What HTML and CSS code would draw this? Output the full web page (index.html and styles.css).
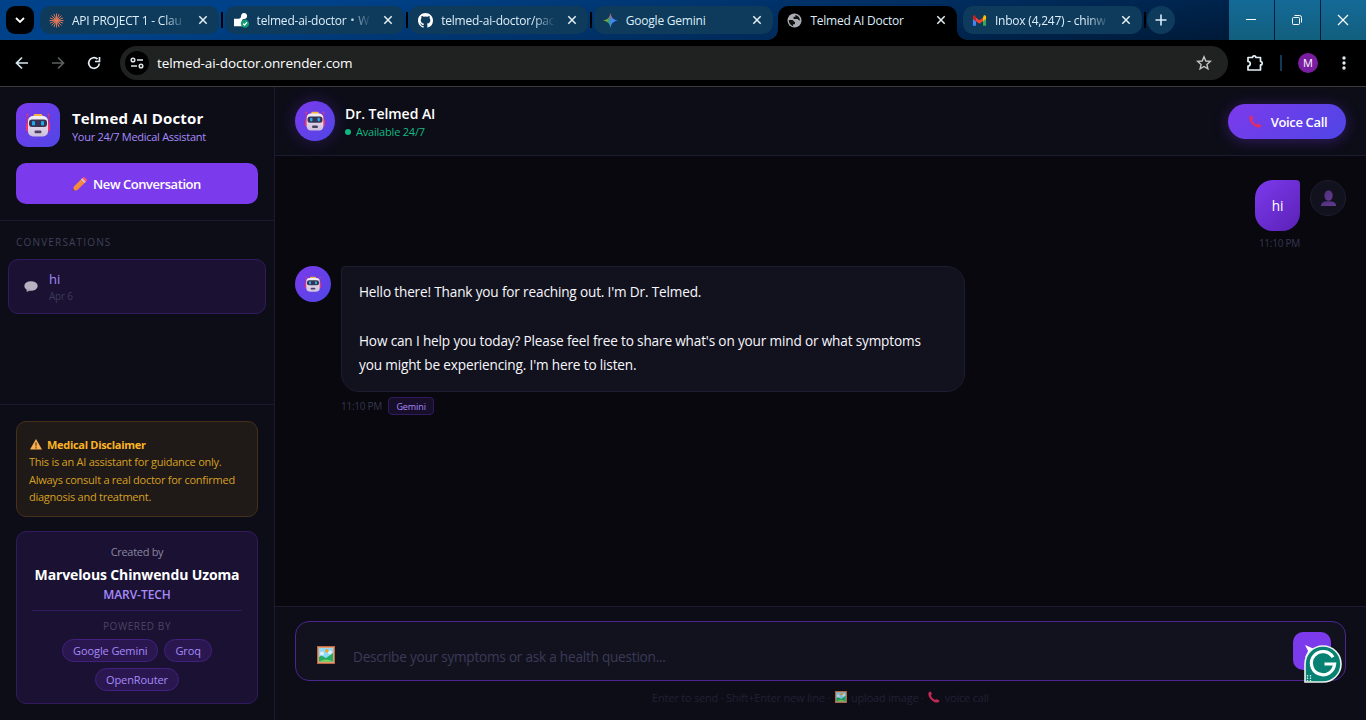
FILE: index.html
```
<!DOCTYPE html>
<html lang="en">
<head>
  <meta charset="UTF-8">
  <title>Telmed AI Doctor</title>
  <meta name="viewport" content="width=device-width, initial-scale=1.0">
  <link rel="stylesheet" href="styles.css">
</head>
<body>

  <svg class="defs" width="0" height="0">
    <defs>
      <linearGradient id="face" x1="0" y1="0" x2="0" y2="1">
        <stop offset="0" stop-color="#f3eef8"/><stop offset="1" stop-color="#cdbfdc"/>
      </linearGradient>
      <linearGradient id="orange" x1="0" y1="0" x2="1" y2="1">
        <stop offset="0" stop-color="#ff9a4a"/><stop offset="1" stop-color="#ee7a33"/>
      </linearGradient>
      <linearGradient id="gem" x1="0" y1="0" x2="1" y2="0">
        <stop offset="0" stop-color="#fbbc04"/><stop offset=".35" stop-color="#34a853"/>
        <stop offset=".55" stop-color="#4285f4"/><stop offset="1" stop-color="#3b86ff"/>
      </linearGradient>
      <linearGradient id="gemTop" x1="0" y1="0" x2="0" y2="1">
        <stop offset="0" stop-color="#f94543"/><stop offset=".45" stop-color="#f94543" stop-opacity="0"/>
      </linearGradient>
      <linearGradient id="user" x1="0" y1="0" x2="1" y2="1">
        <stop offset="0" stop-color="#4a2f7c"/><stop offset="1" stop-color="#663a90"/>
      </linearGradient>
    </defs>
    <symbol id="close" viewBox="0 0 10 10">
      <path d="M1.3 1.3l7.4 7.4M8.7 1.3L1.3 8.7" stroke="currentColor" stroke-width="1.5" fill="none"/>
    </symbol>
    <symbol id="robot" viewBox="0 0 24 24">
      <path d="M1.5 2.5v12M22.5 2.5v12" stroke="#d92a62" stroke-width="1"/>
      <circle cx="1.5" cy="1.7" r="1" fill="#f5386f"/><circle cx="22.5" cy="1.7" r="1" fill="#f5386f"/>
      <rect x="0" y="9.5" width="4" height="9" rx="2" fill="#ee3270"/>
      <rect x="20" y="9.5" width="4" height="9" rx="2" fill="#ee3270"/>
      <rect x="7.5" y="1" width="9" height="4" rx="1.5" fill="#f5b43a"/>
      <rect x="2" y="3" width="20" height="20.5" rx="5" fill="url(#face)"/>
      <rect x="3" y="6.5" width="18" height="7.5" rx="3" fill="#39334f"/>
      <rect x="6" y="8" width="3" height="4.5" rx="1.3" fill="#1fa9ee"/>
      <rect x="15" y="8" width="3" height="4.5" rx="1.3" fill="#1fa9ee"/>
      <rect x="8.5" y="17.5" width="7" height="2.8" rx="1.2" fill="#4a4060"/>
    </symbol>
    <symbol id="phone" viewBox="0 0 14 14">
      <path d="M1.2 1.2C2.500 0 3.300.6 3.900 1.900c.6 1.200.8 2-.1 2.900-.5.500-.3 1 .3 1.900.8 1.200 1.700 2.200 2.800 3 .8.600 1.300.8 1.900.3 1-.8 1.800-.5 3 .1 1.500.7 1.900 1.500.8 2.600-1.700 1.500-4.600.9-7-1C2.500 9.200.5 6.400.4 3.700c0-1 .2-1.900.8-2.500z" fill="#e12d60"/>
    </symbol>
    <symbol id="picture" viewBox="0 0 18 18">
      <rect width="18" height="18" fill="#b96b48"/>
      <rect x="1" y="1" width="16" height="16" fill="#e59a6b"/>
      <rect x="2" y="2" width="14" height="13.5" fill="#8fd9f8"/>
      <circle cx="5" cy="7.5" r="2" fill="#e4eefb"/><circle cx="13" cy="6.5" r="2" fill="#e4eefb"/>
      <circle cx="9.8" cy="4.7" r="1.8" fill="#f6a11f"/>
      <path d="M2 11l2.500-1.500L9 12l7-5v8.500H2z" fill="#26ad65"/>
      <path d="M3 15.500c2-2.500 10-2.500 12 0z" fill="#7ed957"/>
    </symbol>
  </svg>

  <!-- browser tabs -->
  <div class="tab-strip">
    <button class="tab-search"><svg width="10" height="6"><path d="M1 1l4 4 4-4" stroke="#fff" stroke-width="1.8" fill="none"/></svg></button>
    <div class="tabs">
      <div class="tab">
        <svg class="favicon" viewBox="-8 -8 16 16"><path d="M0-7.500V7.500M-7.500 0H7.500M-5.300-5.300L5.300 5.300M5.300-5.300L-5.300 5.300M-2.800-7L2.800 7M2.800-7L-2.800 7M-7-2.800L7 2.800M7-2.800L-7 2.800" stroke="#e2795a" stroke-width="1"/></svg>
        <span class="tab-title fade">API PROJECT 1 - Clau</span>
        <svg class="tab-close"><use href="#close"/></svg>
      </div>
      <div class="tab">
        <svg class="favicon" viewBox="0 0 16 16"><path d="M0 6h5c1.500 0 2.500-1 2.500-2.500S8.500 0 10.700 0C13 0 14 1.700 14 3.200c0 2-1.500 3.300-3.500 3.300-1.500 0-2 1-2 2.500V14H0z" fill="#fff"/><circle cx="11.7" cy="11.3" r="4.4" fill="#119a75"/><path d="M9.700 11.300l1.500 1.500 2.700-2.900" stroke="#fff" stroke-width="1.3" fill="none"/></svg>
        <span class="tab-title fade">telmed-ai-doctor・W</span>
        <svg class="tab-close"><use href="#close"/></svg>
      </div>
      <div class="tab">
        <svg class="favicon" viewBox="0 0 16 16"><path fill="#fff" d="M8 0C3.580 0 0 3.580 0 8c0 3.540 2.290 6.530 5.470 7.590.4.070.55-.17.55-.38 0-.19-.01-.82-.01-1.490-2.010.37-2.530-.49-2.690-.94-.09-.23-.48-.94-.82-1.130-.28-.15-.68-.52-.01-.53.63-.01 1.080.58 1.230.82.72 1.210 1.870.87 2.330.66.070-.52.280-.87.510-1.070-1.780-.2-3.640-.89-3.640-3.950 0-.87.310-1.590.82-2.150-.08-.2-.36-1.020.08-2.120 0 0 .67-.21 2.200.82a7.600 7.600 0 0 1 4 0c1.530-1.040 2.200-.82 2.200-.82.44 1.100.16 1.920.08 2.120.51.56.82 1.270.82 2.150 0 3.070-1.870 3.750-3.650 3.950.29.25.54.73.54 1.480 0 1.070-.01 1.930-.01 2.200 0 .21.15.46.55.38A8 8 0 0 0 16 8c0-4.420-3.580-8-8-8z"/></svg>
        <span class="tab-title fade">telmed-ai-doctor/pac</span>
        <svg class="tab-close"><use href="#close"/></svg>
      </div>
      <div class="tab last">
        <svg class="favicon" viewBox="0 0 16 16"><path d="M8 0c.7 4.700 3.300 7.300 8 8-4.700.7-7.300 3.300-8 8-.7-4.700-3.300-7.300-8-8 4.700-.7 7.300-3.300 8-8z" fill="url(#gem)"/><path d="M8 0c.7 4.700 3.300 7.300 8 8-4.700.7-7.300 3.300-8 8-.7-4.700-3.300-7.300-8-8 4.700-.7 7.300-3.300 8-8z" fill="url(#gemTop)"/></svg>
        <span class="tab-title">Google Gemini</span>
        <svg class="tab-close"><use href="#close"/></svg>
      </div>
      <div class="tab active">
        <svg class="favicon" viewBox="0 0 16 16"><circle cx="8" cy="8" r="7.5" fill="#a9adb3"/><path d="M2 7.500h3.500c1.500 0 1.500 2 3 2v2.500H6.500V14c-2.500-.6-4.700-3-4.500-6.500zM9 2v2H7v2.300h4c1 0 1 1.700 2.800 1.700C14 5 12 2.500 9 2z" fill="#111"/></svg>
        <span class="tab-title">Telmed AI Doctor</span>
        <svg class="tab-close"><use href="#close"/></svg>
      </div>
      <div class="tab">
        <svg class="favicon" viewBox="0 0 16 16"><path d="M1 4v9.500h3.300V6z" fill="#4285f4"/><path d="M15 4v9.500h-3.300V6z" fill="#34a853"/><path d="M2.500 3.500L8 7.800l5.500-4.300v4L8 11.500l-5.500-4z" fill="#ea4335"/><path d="M11.700 5V9L15 6.500V4c0-1.500-1.500-2.200-2.500-1.300z" fill="#fbbc04"/><path d="M4.300 5V9L1 6.500V4c0-1.500 1.500-2.200 2.500-1.300z" fill="#c5221f"/></svg>
        <span class="tab-title fade">Inbox (4,247) - chinw</span>
        <svg class="tab-close"><use href="#close"/></svg>
      </div>
    </div>
    <button class="new-tab"><svg width="12" height="12"><path d="M6 .5v11M.5 6h11" stroke="#dcebf5" stroke-width="1.6"/></svg></button>
    <div class="window-buttons">
      <span><svg width="12" height="12"><path d="M1 5.500h10" stroke="#fff"/></svg></span>
      <span><svg width="12" height="12" fill="none" stroke="#fff"><rect x="1.5" y="3.5" width="7" height="7" rx="1"/><path d="M3.500 1.500h5a2 2 0 0 1 2 2v5"/></svg></span>
      <span><svg width="12" height="12"><path d="M1 1l10 10M11 1L1 11" stroke="#fff" stroke-width="1.2"/></svg></span>
    </div>
  </div>

  <!-- address bar -->
  <div class="toolbar">
    <div class="nav">
      <svg width="14" height="14" stroke="#d7e6ee"><path d="M13 7H2M7 1.500L1.500 7 7 12.500"/></svg>
      <svg width="14" height="14" stroke="#5c5f61"><path d="M1 7h11M7 1.500L12.500 7 7 12.500"/></svg>
      <svg width="14" height="14" stroke="#e4edf2"><path d="M12.300 7.500A5.300 5.300 0 1 1 10.500 3M12.500 1v4.500H8"/></svg>
    </div>
    <div class="address">
      <span class="site-info"><svg width="14" height="12" fill="none" stroke="#e0e6e8" stroke-width="1.5"><circle cx="3" cy="3" r="1.8"/><path d="M7 3h6M1 9h6"/><circle cx="11" cy="9" r="1.8"/></svg></span>
      <span class="url">telmed-ai-doctor.onrender.com</span>
      <svg class="star" width="16" height="16"><path d="M8 1.800l1.800 4.200 4.500.4-3.400 3 1 4.500L8 11.500l-3.900 2.400 1-4.500-3.400-3 4.500-.4z" fill="none" stroke="#c4c7c5" stroke-width="1.4"/></svg>
    </div>
    <svg class="puzzle" width="18" height="18"><path d="M2 3.500h4.500a1.700 1.700 0 0 1 3.400 0H14.500v4a1.700 1.700 0 0 1 0 3.400V16H2v-4a2 2 0 0 0 0-4.500z" fill="none" stroke="#e3f1f5" stroke-width="1.7" stroke-linejoin="round"/></svg>
    <span class="divider"></span>
    <span class="profile">M</span>
    <svg class="menu" width="4" height="14" fill="#dfeaf0"><circle cx="2" cy="2" r="1.7"/><circle cx="2" cy="7" r="1.7"/><circle cx="2" cy="12" r="1.7"/></svg>
  </div>

  <div class="app">
    <aside class="sidebar">
      <div class="sidebar-header">
        <div class="brand">
          <div class="brand-logo"><svg width="24" height="24"><use href="#robot"/></svg></div>
          <div class="brand-text">
            <h1>Telmed AI Doctor</h1>
            <p>Your 24/7 Medical Assistant</p>
          </div>
        </div>
        <button class="new-chat">
          <svg width="14" height="14" viewBox="0 0 14 14"><path d="M0 14l1-4.500L9.500 1l3.500 3.500L4.500 13z" fill="url(#orange)"/><path d="M0 14l.4-2 1.600 1.600z" fill="#5b3b45"/><path d="M8 2.500L9.500 1 13 4.500 11.500 6z" fill="#c9c6dc"/><path d="M9.300 1.200l.8-.8c.6-.6 1.300-.5 1.900.1l1.500 1.500c.6.600.7 1.300.1 1.900l-.8.8z" fill="#f8526a"/></svg>
          <span>New Conversation</span>
        </button>
      </div>

      <div class="conversations">
        <h2>CONVERSATIONS</h2>
        <div class="conversation">
          <svg width="14" height="12" viewBox="0 0 14 12"><ellipse cx="7" cy="5" rx="6.7" ry="4.8" fill="#b9b1c2"/><path d="M2.500 7.500L2.800 11 7 9z" fill="#a79fb2"/></svg>
          <div>
            <div class="conversation-title">hi</div>
            <div class="conversation-date">Apr 6</div>
          </div>
        </div>
      </div>

      <div class="sidebar-footer">
        <div class="disclaimer">
          <strong><svg width="12" height="11" viewBox="0 0 12 11"><path d="M6 0l6 10.500H0z" fill="#fbb04d"/><path d="M5.400 3.500h1.200L6.400 7.500h-.8zM5.400 8.200h1.200v1.200H5.400z" fill="#3d2b25"/></svg><span>Medical Disclaimer</span></strong>
          <p>This is an AI assistant for guidance only.<br>Always consult a real doctor for confirmed<br>diagnosis and treatment.</p>
        </div>
        <div class="credits">
          <div class="created">Created by</div>
          <div class="author">Marvelous Chinwendu Uzoma</div>
          <div class="company">MARV-TECH</div>
          <div class="powered">POWERED BY</div>
          <div class="chips">
            <span class="chip">Google Gemini</span>
            <span class="chip">Groq</span>
            <span class="chip">OpenRouter</span>
          </div>
        </div>
      </div>
    </aside>

    <main class="chat">
      <header class="chat-header">
        <div class="doctor-avatar"><svg width="20" height="20"><use href="#robot"/></svg></div>
        <div class="doctor">
          <div class="doctor-name">Dr. Telmed AI</div>
          <div class="doctor-status"><i></i><span>Available 24/7</span></div>
        </div>
        <button class="call"><svg width="13" height="13" viewBox="0 0 14 14"><use href="#phone"/></svg><span>Voice Call</span></button>
      </header>

      <div class="messages">
        <div class="message user">
          <div class="message-body">
            <div class="bubble">hi</div>
            <div class="meta"><span>11:10 PM</span></div>
          </div>
          <div class="avatar"><svg width="15" height="16" viewBox="0 0 16 17"><path d="M0 17c0-3.500 2.500-5 8-5s8 1.500 8 5z" fill="url(#user)"/><ellipse cx="8" cy="5.8" rx="4.4" ry="5.6" fill="url(#user)"/></svg></div>
        </div>
        <div class="message bot">
          <div class="avatar"><svg width="16" height="16"><use href="#robot"/></svg></div>
          <div class="message-body">
            <div class="bubble">Hello there! Thank you for reaching out. I'm Dr. Telmed.<br><br>How can I help you today? Please feel free to share what's on your mind or what symptoms<br>you might be experiencing. I'm here to listen.</div>
            <div class="meta"><span>11:10 PM</span><span class="model">Gemini</span></div>
          </div>
        </div>
      </div>

      <footer class="composer">
        <div class="input-box">
          <svg class="upload" width="18" height="18"><use href="#picture"/></svg>
          <span class="placeholder">Describe your symptoms or ask a health question...</span>
          <button class="send"><svg width="14" height="14" viewBox="0 0 16 16"><path d="M0 1l16 7L0 15l3.500-7z" fill="#fff"/></svg></button>
          <svg class="grammarly" viewBox="0 0 38 38"><path d="M1 37V19a18 18 0 1 1 18 18z" fill="#078172" stroke="#eef5f0" stroke-width="1.6"/><path d="M29 12.200A11.600 11.600 0 1 0 30.600 19H20.500" fill="none" stroke="#fff" stroke-width="3.2"/><path d="M3.500 30v6M6.500 30v6" stroke="#d6eee8" stroke-width="1.3" stroke-dasharray="1.4 1.1"/></svg>
        </div>
        <div class="hint"><span>Enter to send · Shift+Enter new line ·</span><svg width="12" height="12"><use href="#picture"/></svg><span>upload image ·</span><svg width="12" height="12"><use href="#phone"/></svg><span>voice call</span></div>
      </footer>
    </main>
  </div>

</body>
</html>
```
FILE: styles.css
```
* { box-sizing: border-box; margin: 0; padding: 0; }
body {
  width: 1366px;
  height: 720px;
  overflow: hidden;
  display: flex;
  flex-direction: column;
  background: #000;
  color: #fff;
  font-family: "Open Sans", "Noto Sans", "Noto Sans CJK JP", sans-serif;
  font-size: 13px;
}
button { font: inherit; color: inherit; border: none; background: none; }
svg { flex: none; display: block; }
span { white-space: nowrap; }
.defs { position: absolute; }

/* tab strip */
.tab-strip {
  height: 40px;
  flex: none;
  display: flex;
  align-items: flex-start;
  background: linear-gradient(172deg, #00428a 20%, #001b3a 90%);
}
.tab-search {
  width: 28px;
  height: 28px;
  margin: 6px 6px 0;
  border-radius: 9px;
  background: #000;
  display: grid;
  place-items: center;
}
.tabs { display: flex; gap: 5.6px; padding-top: 6px; }
.tab {
  width: 179px;
  height: 28px;
  border-radius: 10px;
  background: #0e3a5c;
  display: flex;
  align-items: center;
  padding: 0 11px 0 9px;
  position: relative;
}
.tab:not(.last):not(.active)::after {
  content: "";
  position: absolute;
  right: -4px;
  top: 6px;
  width: 2px;
  height: 16px;
  background: #000;
}
.tab.active { background: #000; height: 34px; border-radius: 10px 10px 0 0; padding-bottom: 6px; }
.tab.active::before, .tab.active::after {
  content: "";
  position: absolute;
  bottom: 0;
  width: 10px;
  height: 10px;
}
.tab.active::before { left: -10px; background: radial-gradient(circle at 0 0, transparent 9.5px, #000 10px); }
.tab.active::after { right: -10px; background: radial-gradient(circle at 100% 0, transparent 9.5px, #000 10px); }
.favicon { width: 15px; height: 15px; margin-right: 8px; }
.tab-title { width: 118px; font-size: 12px; letter-spacing: -.22px; color: #dceef8; }
.fade { -webkit-mask-image: linear-gradient(90deg, #000 78%, transparent 97%); mask-image: linear-gradient(90deg, #000 78%, transparent 97%); }
.tab-close { width: 10px; height: 10px; margin-left: auto; color: #e6f1f6; }
.new-tab {
  width: 28px;
  height: 28px;
  margin: 6px 0 0 5px;
  border-radius: 50%;
  background: #0e3a5c;
  display: grid;
  place-items: center;
}
.window-buttons { margin-left: auto; display: flex; gap: 1px; height: 40px; }
.window-buttons span {
  width: 45px;
  padding-right: 2px;
  display: grid;
  place-items: center;
  background: linear-gradient(#146a97, #125f7e);
}

/* toolbar */
.toolbar {
  height: 47px;
  flex: none;
  display: flex;
  align-items: center;
  border-bottom: 1px solid #3b3b3e;
  padding: 0 20px 0 15px;
}
.nav { display: flex; gap: 22px; fill: none; stroke-width: 1.7; }
.address {
  width: 1108px;
  height: 34px;
  margin: 0 18px 0 19px;
  border-radius: 17px;
  background: #202222;
  display: flex;
  align-items: center;
  padding: 0 16px 0 5px;
}
.site-info {
  width: 24px;
  height: 24px;
  border-radius: 50%;
  background: #000;
  display: grid;
  place-items: center;
  margin-right: 8px;
}
.url { font-size: 13.5px; letter-spacing: -.1px; }
.star { margin-left: auto; }
.divider { width: 2px; height: 16px; background: #123a57; margin: 0 16px; }
.profile {
  width: 20px;
  height: 20px;
  border-radius: 50%;
  background: #7b1fa2;
  font-size: 11px;
  line-height: 20px;
  text-align: center;
}
.menu { margin-left: 24px; }

/* layout */
.app { flex: 1; display: flex; min-height: 0; }
.sidebar {
  width: 275px;
  flex: none;
  display: flex;
  flex-direction: column;
  background: #0d0d18;
  border-right: 1px solid #1c1a2e;
}
.sidebar-header { height: 134px; padding: 16px; border-bottom: 1px solid #1c1a2e; }
.brand { display: flex; align-items: center; gap: 12px; height: 44px; }
.brand-logo {
  width: 44px;
  height: 44px;
  border-radius: 12px;
  background: linear-gradient(135deg, #7c3aed, #4f46e5);
  display: grid;
  place-items: center;
}
.brand-text { padding-top: 2px; }
.brand h1 { font-size: 15px; line-height: 20px; letter-spacing: .15px; white-space: nowrap; }
.brand p { font-size: 11px; line-height: 17px; letter-spacing: -.28px; color: #a78bfa; white-space: nowrap; }
.new-chat {
  width: 100%;
  height: 41px;
  margin-top: 16px;
  border-radius: 10px;
  background: #7c3aed;
  display: flex;
  align-items: center;
  justify-content: center;
  gap: 6px;
  font-weight: 600;
  letter-spacing: -.45px;
}
.conversations { flex: 1; padding: 13px 8px; }
.conversations h2 { font-size: 10px; line-height: 17px; font-weight: 400; letter-spacing: 1.18px; color: #404058; padding-left: 8px; }
.conversation {
  height: 55px;
  margin-top: 8px;
  padding: 1px 15px 0;
  border: 1px solid #321a5f;
  border-radius: 10px;
  background: #1a1133;
  display: flex;
  align-items: center;
  gap: 11px;
}
.conversation-title { font-size: 13px; line-height: 18px; color: #a78bfa; }
.conversation-date { font-size: 10px; line-height: 16px; letter-spacing: -.2px; color: #3f3b58; }
.sidebar-footer { border-top: 1px solid #1c1a2e; padding: 16px; }
.disclaimer {
  height: 96px;
  padding: 14px 12px;
  border: 1px solid #46301a;
  border-radius: 10px;
  background: #1f1918;
  color: #d6a021;
  font-size: 11px;
  line-height: 17.5px;
  letter-spacing: -.25px;
}
.disclaimer strong { display: flex; align-items: center; gap: 5px; height: 17px; padding-left: 1px; color: #fbb424; letter-spacing: -.3px; }
.credits {
  height: 173px;
  margin-top: 14px;
  padding: 10px 15px;
  border: 1px solid #321a5f;
  border-radius: 10px;
  background: #1a1133;
  text-align: center;
}
.created { font-size: 11px; line-height: 20px; color: #8a879e; letter-spacing: -.3px; }
.author { font-size: 14px; line-height: 26px; font-weight: 700; white-space: nowrap; letter-spacing: -.13px; }
.company { font-size: 12px; line-height: 14px; font-weight: 600; color: #a78bfa; letter-spacing: -.05px; height: 23px; border-bottom: 1px solid #321a5f; }
.powered { font-size: 10px; line-height: 16px; letter-spacing: .6px; color: #4a4563; margin-top: 7px; }
.chips { display: flex; flex-wrap: wrap; justify-content: center; gap: 6px; margin-top: 5px; }
.chip {
  height: 23px;
  padding: 0 10px;
  border: 1px solid #41217d;
  border-radius: 12px;
  background: #2a174f;
  color: #a78bfa;
  font-size: 11px;
  line-height: 21px;
  font-weight: 500;
  letter-spacing: -.1px;
}

/* chat */
.chat { flex: 1; display: flex; flex-direction: column; background: #08080e; }
.chat-header {
  height: 69px;
  padding: 0 20px;
  display: flex;
  align-items: center;
  background: #0d0d18;
  border-bottom: 1px solid #1c1a2e;
}
.doctor-avatar {
  width: 40px;
  height: 40px;
  border-radius: 50%;
  background: linear-gradient(135deg, #7c3aed, #4f46e5);
  box-shadow: 0 0 16px rgba(124, 58, 237, .3);
  display: grid;
  place-items: center;
  margin-right: 10px;
}
.doctor { padding-top: 2px; }
.doctor-name { font-size: 14px; line-height: 20px; font-weight: 600; letter-spacing: -.05px; }
.doctor-status { display: flex; align-items: center; gap: 5px; font-size: 11px; line-height: 16px; color: #10b981; letter-spacing: -.2px; }
.doctor-status i { width: 6px; height: 6px; border-radius: 50%; background: #10b981; }
.call {
  width: 118px;
  height: 35px;
  margin-left: auto;
  border-radius: 18px;
  background: linear-gradient(135deg, #7c3aed, #4f46e5);
  box-shadow: 0 2px 14px rgba(124, 58, 237, .35);
  display: flex;
  align-items: center;
  justify-content: center;
  gap: 9px;
  padding: 1px 0 0 2px;
  font-weight: 600;
  letter-spacing: -.35px;
}
.messages { flex: 1; padding: 24px 20px; }
.message { display: flex; gap: 10px; }
.avatar { width: 36px; height: 36px; flex: none; border-radius: 50%; display: grid; place-items: center; }
.user { justify-content: flex-end; height: 86px; }
.user .avatar { background: #12121e; border: 1px solid #1e1c30; }
.bot .avatar { background: linear-gradient(135deg, #7c3aed, #4f46e5); }
.bubble { font-size: 13.6px; line-height: 24.4px; letter-spacing: -.16px; }
.user .bubble {
  width: 45px;
  height: 51px;
  line-height: 51px;
  text-align: center;
  border-radius: 18px 4px 18px 18px;
  background: linear-gradient(135deg, #7c3aed, #5b21b6);
}
.user .meta { justify-content: flex-end; }
.user .message-body { display: flex; flex-direction: column; align-items: flex-end; }
.bot .bubble {
  width: 624px;
  height: 126px;
  padding: 13px 17px;
  border: 1px solid #1e1c30;
  border-radius: 4px 18px 18px 18px;
  background: #12121e;
  color: #f8f7fd;
}
.meta { display: flex; align-items: center; gap: 6px; height: 18px; margin-top: 5px; font-size: 10px; letter-spacing: -.25px; color: #363650; }
.user .meta { margin-top: 3px; }
.model {
  height: 18px;
  width: 46px;
  text-align: center;
  border: 1px solid #321a5f;
  border-radius: 4px;
  background: #170e2a;
  color: #a78bfa;
  font-size: 9px;
  line-height: 17px;
  letter-spacing: -.1px;
}

/* composer */
.composer { height: 114px; padding: 14px 20px 0; background: #0d0d18; border-top: 1px solid #1c1a2e; }
.input-box {
  height: 60px;
  padding: 0 14px 0 21px;
  border: 1px solid #4c2590;
  border-radius: 14px;
  background: #12121e;
  display: flex;
  align-items: center;
  position: relative;
}
.upload { margin-top: 8px; }
.placeholder { margin: 11px 0 0 18px; font-size: 13.6px; color: #3a3a58; letter-spacing: -.23px; }
.send {
  width: 38px;
  height: 38px;
  margin: -1px 0 0 auto;
  border-radius: 10px;
  background: #7c3aed;
  display: grid;
  place-items: center;
}
.grammarly { position: absolute; right: 3px; bottom: -3px; width: 38px; height: 38px; }
.hint { display: flex; align-items: center; justify-content: center; gap: 4.5px; height: 16px; margin-top: 8px; font-size: 11px; color: #202033; letter-spacing: -.2px; }
.hint svg { opacity: .85; }
```
